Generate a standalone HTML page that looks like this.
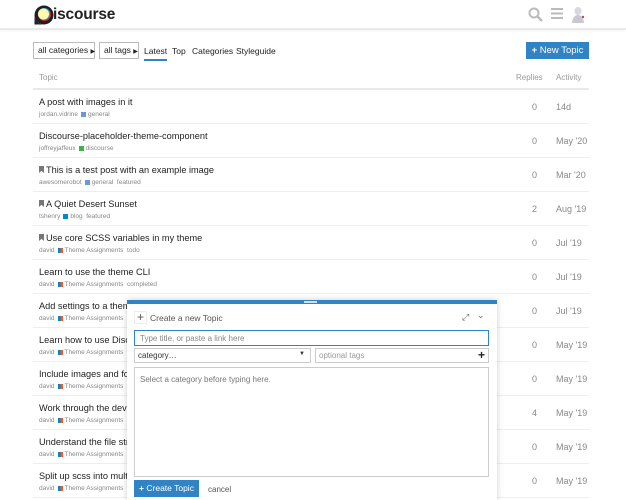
<!DOCTYPE html>
<html><head><meta charset="utf-8"><style>
*{box-sizing:border-box;margin:0;padding:0}
body{width:626px;height:500px;overflow:hidden;background:#fff;font-family:"Liberation Sans",sans-serif;color:#222;position:relative}
.hdr{position:absolute;left:0;top:0;width:626px;height:30px;border-bottom:2px solid #e9e9e9;box-shadow:0 1px 2px rgba(0,0,0,.05)}
.logo{position:absolute;top:6px;font-size:15.5px;font-weight:bold;letter-spacing:-.2px}
.btn{position:absolute;border:1px solid #bbb;font-size:8.5px;padding:0 4px;height:17px;line-height:15px;background:#fff;white-space:nowrap}
.nav{position:absolute;top:46px;font-size:8.5px;white-space:nowrap}
.row{position:absolute;left:33px;width:556px;height:34px;border-bottom:1px solid #eee}
.t{position:absolute;left:6px;top:7px;font-size:9.2px;color:#222;white-space:nowrap}
.m{position:absolute;left:6px;top:21px;font-size:6.5px;color:#888;white-space:nowrap}
.sq{display:inline-block;width:5px;height:5px;vertical-align:middle;margin:0 2px 0 3px}
.r{position:absolute;left:499px;top:12px;font-size:9px;color:#888}
.a{position:absolute;left:523px;top:12px;font-size:9px;color:#888;white-space:nowrap}
.bm{display:inline-block;width:5px;height:7px;background:#777;clip-path:polygon(0 0,100% 0,100% 100%,50% 70%,0 100%);margin-right:2px}
.ta{background:linear-gradient(90deg,#0088cc 50%,#f1592a 50%)}
.cp{position:absolute;left:127px;top:300px;width:370px;height:200px;background:#fff;border-top:4px solid #3083c4;box-shadow:0 0 6px rgba(0,0,0,.2)}
</style></head><body>
<div class="hdr">
<svg style="position:absolute;left:34px;top:5px" width="20" height="20" viewBox="0 0 20 20"><circle cx="10" cy="10" r="9.5" fill="#231f20"/><circle cx="10.5" cy="9.5" r="6.5" fill="#d0232b"/><circle cx="10" cy="9" r="6" fill="#00aeef"/><circle cx="9.5" cy="9" r="5.5" fill="#fff9ae"/><path d="M0.5 10 V19.5 H10 A9.5 9.5 0 0 1 0.5 10Z" fill="#231f20"/></svg>
<div class="logo" style="left:53px">iscourse</div>
<svg style="position:absolute;left:528px;top:7px" width="15" height="15" viewBox="0 0 15 15"><circle cx="6" cy="6" r="4.5" fill="none" stroke="#bbb" stroke-width="2"/><path d="M9.5 9.5L14 14" stroke="#bbb" stroke-width="2.5"/></svg>
<svg style="position:absolute;left:551px;top:8px" width="12" height="11"><rect y="0" width="12" height="2" fill="#bbb"/><rect y="4.5" width="12" height="2" fill="#bbb"/><rect y="9" width="12" height="2" fill="#bbb"/></svg>
<svg style="position:absolute;left:570px;top:5px" width="16" height="18" viewBox="0 0 16 18"><ellipse cx="8" cy="6" rx="3.5" ry="4" fill="#d8d8e0"/><path d="M2 18 Q3 10 8 10 Q13 10 14 18Z" fill="#c8c8d0"/><circle cx="13" cy="12" r="1.2" fill="#c44"/></svg>
</div>
<div class="btn" style="left:33px;top:42px;width:62px">all categories <span style="font-size:6px">▶</span></div>
<div class="btn" style="left:99px;top:42px;width:40px">all tags <span style="font-size:6px">▶</span></div>
<div class="nav" style="left:144px;padding-bottom:3px;border-bottom:2px solid #3083c4">Latest</div>
<div class="nav" style="left:172px">Top</div>
<div class="nav" style="left:192px">Categories</div>
<div class="nav" style="left:236px">Styleguide</div>
<div style="position:absolute;left:526px;top:42px;width:63px;height:17px;background:#3083c4;color:#fff;font-size:9.5px;line-height:17px;text-align:center;white-space:nowrap"><b>+</b> New Topic</div>
<div style="position:absolute;left:33px;top:66px;width:556px;height:24px;border-bottom:2px solid #e9e9e9;font-size:8px;color:#999">
<span style="position:absolute;left:6px;top:7px">Topic</span><span style="position:absolute;left:483px;top:7px">Replies</span><span style="position:absolute;left:523px;top:7px">Activity</span></div>

<div class="row" style="top:90px"><div class="t">A post with images in it</div><div class="m">jordan.vidrine<span class="sq" style="background:#6a9ad3"></span>general</div><div class="r">0</div><div class="a">14d</div></div>
<div class="row" style="top:124px"><div class="t">Discourse-placeholder-theme-component</div><div class="m">joffreyjaffeux<span class="sq" style="background:#3ab54a"></span>discourse</div><div class="r">0</div><div class="a">May '20</div></div>
<div class="row" style="top:158px"><div class="t"><span class="bm"></span>This is a test post with an example image</div><div class="m">awesomerobot<span class="sq" style="background:#6a9ad3"></span>general &nbsp;featured</div><div class="r">0</div><div class="a">Mar '20</div></div>
<div class="row" style="top:192px"><div class="t"><span class="bm"></span>A Quiet Desert Sunset</div><div class="m">tshenry<span class="sq" style="background:#0088cc"></span>blog &nbsp;featured</div><div class="r">2</div><div class="a">Aug '19</div></div>
<div class="row" style="top:226px"><div class="t"><span class="bm"></span>Use core SCSS variables in my theme</div><div class="m">david<span class="sq ta"></span>Theme Assignments &nbsp;todo</div><div class="r">0</div><div class="a">Jul '19</div></div>
<div class="row" style="top:260px"><div class="t">Learn to use the theme CLI</div><div class="m">david<span class="sq ta"></span>Theme Assignments &nbsp;completed</div><div class="r">0</div><div class="a">Jul '19</div></div>
<div class="row" style="top:294px"><div class="t">Add settings to a theme</div><div class="m">david<span class="sq ta"></span>Theme Assignments</div><div class="r">0</div><div class="a">Jul '19</div></div>
<div class="row" style="top:328px"><div class="t">Learn how to use Discourse</div><div class="m">david<span class="sq ta"></span>Theme Assignments</div><div class="r">0</div><div class="a">May '19</div></div>
<div class="row" style="top:362px"><div class="t">Include images and fonts</div><div class="m">david<span class="sq ta"></span>Theme Assignments</div><div class="r">0</div><div class="a">May '19</div></div>
<div class="row" style="top:396px"><div class="t">Work through the development</div><div class="m">david<span class="sq ta"></span>Theme Assignments</div><div class="r">4</div><div class="a">May '19</div></div>
<div class="row" style="top:430px"><div class="t">Understand the file structure</div><div class="m">david<span class="sq ta"></span>Theme Assignments</div><div class="r">0</div><div class="a">May '19</div></div>
<div class="row" style="top:464px"><div class="t">Split up scss into multiple files</div><div class="m">david<span class="sq ta"></span>Theme Assignments</div><div class="r">0</div><div class="a">May '19</div></div>

<div class="cp">
<div style="position:absolute;left:177px;top:-3px;width:13px;height:2px;background:#cfe2f3"></div>
<div style="position:absolute;left:7px;top:7px;width:13px;height:13px;border:1px solid #eee;text-align:center;line-height:11px;font-size:12px;color:#555">+</div>
<div style="position:absolute;left:23px;top:9px;font-size:8.5px;color:#555">Create a new Topic</div>
<div style="position:absolute;left:335px;top:8px;font-size:9px;color:#666">⤢</div>
<div style="position:absolute;left:350px;top:6px;font-size:9px;color:#666">⌄</div>
<div style="position:absolute;left:7px;top:26px;width:355px;height:16px;border:1px solid #3083c4;font-size:8px;color:#888;padding:3px 5px">Type title, or paste a link here</div>
<div style="position:absolute;left:7px;top:44px;width:177px;height:15px;border:1px solid #ccc;font-size:8px;color:#333;padding:2px 3px">category…<span style="position:absolute;right:5px;top:2px;font-size:6px">▼</span></div>
<div style="position:absolute;left:188px;top:44px;width:174px;height:15px;border:1px solid #ccc;font-size:8px;color:#999;padding:2px 3px">optional tags<span style="position:absolute;right:3px;top:-1px;font-size:12px;color:#222;font-weight:bold">+</span></div>
<div style="position:absolute;left:7px;top:63px;width:355px;height:110px;border:1px solid #ccc;font-size:8px;color:#777;padding:7px 5px">Select a category before typing here.</div>
<div style="position:absolute;left:7px;top:176px;width:65px;height:17px;background:#3083c4;color:#fff;font-size:8.5px;line-height:17px;text-align:center"><b>+</b> Create Topic</div>
<div style="position:absolute;left:81px;top:181px;font-size:8px;color:#555">cancel</div>
</div>
</body></html>
